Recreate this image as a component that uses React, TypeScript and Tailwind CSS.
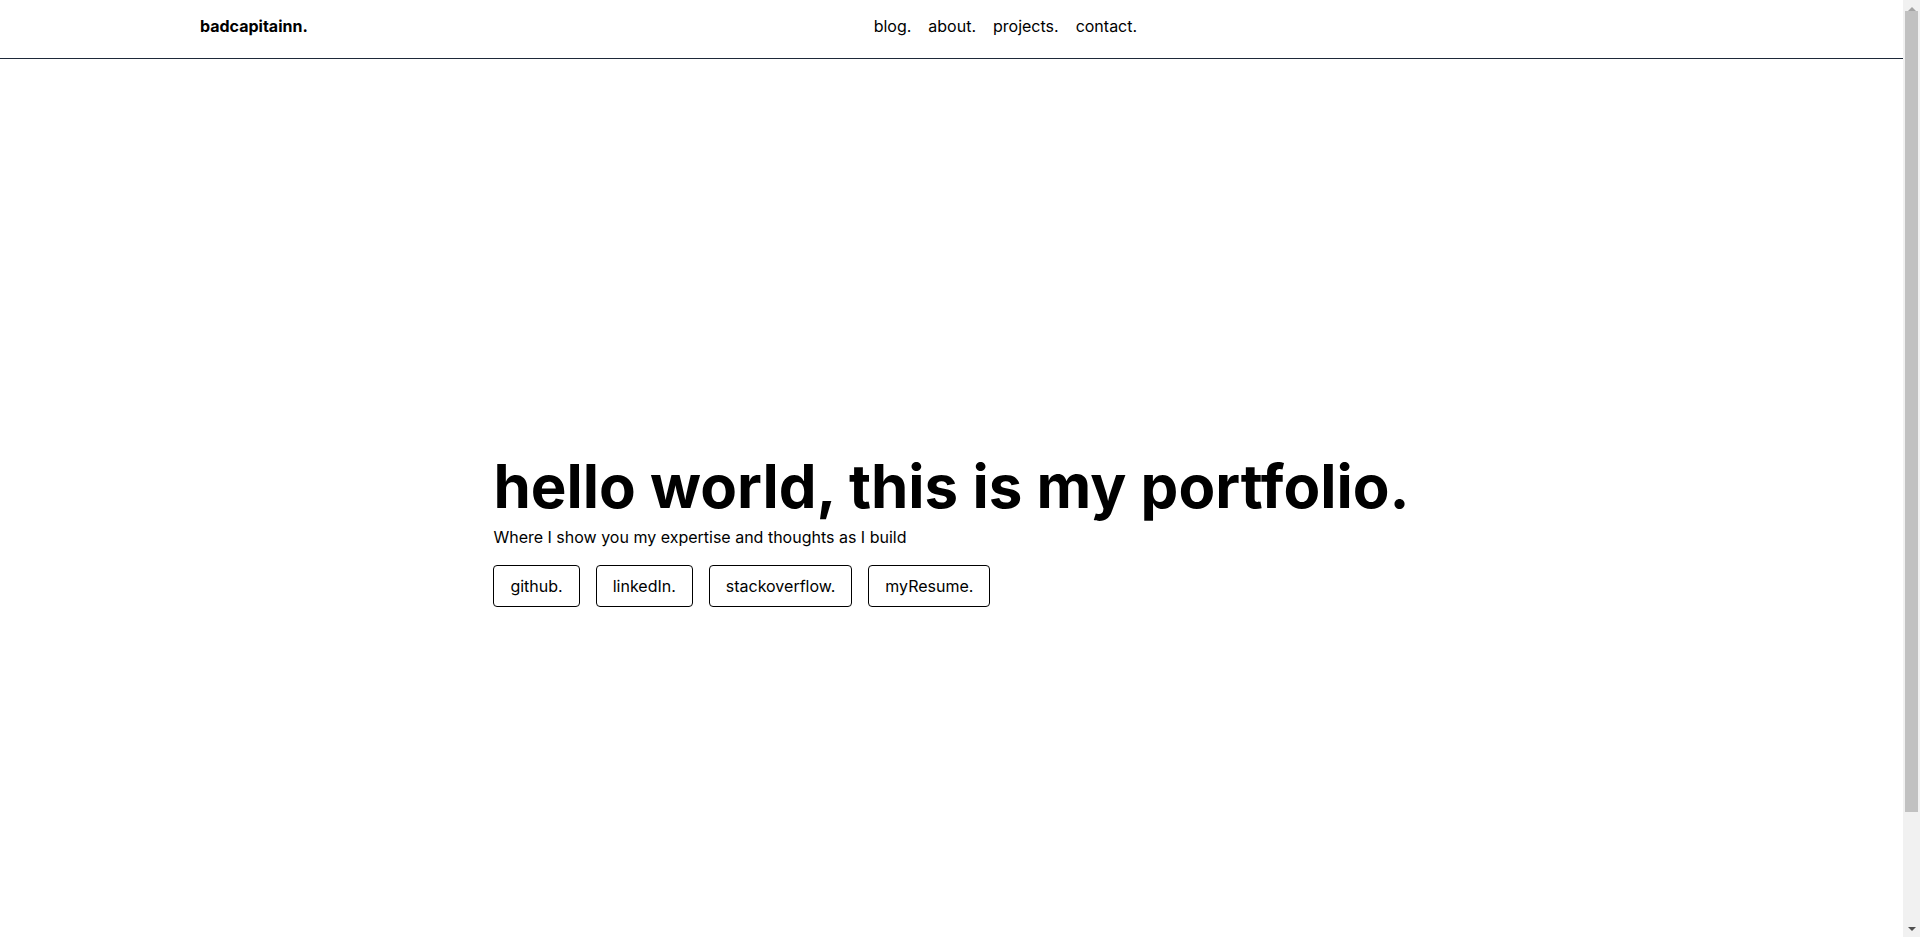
import React from 'react';

const navLinks = ['blog.', 'about.', 'projects.', 'contact.'];
const socials = ['github.', 'linkedIn.', 'stackoverflow.', 'myResume.'];

const App: React.FC = () => {
  return (
    <div className="flex h-screen overflow-hidden bg-white text-black font-['Inter',sans-serif]">
      <div className="flex-1 min-w-0 overflow-hidden">
        <header className="flex items-start justify-between px-[200px] pt-[14px] pb-[20px] border-b border-gray-800">
          <a href="#" className="font-bold text-base leading-6">badcapitainn.</a>
          <nav className="flex gap-[17px] text-base leading-6">
            {navLinks.map((link) => (
              <a key={link} href="#">{link}</a>
            ))}
          </nav>
          <div />
        </header>

        <section className="h-screen pt-[8px] flex items-center justify-center">
          <div className="flex flex-col items-start">
            <h1 className="text-6xl leading-none font-bold">hello world, this is my portfolio.</h1>
            <p className="mt-[9px] text-base leading-6">Where I show you my expertise and thoughts as I build</p>
            <div className="mt-4 flex gap-4">
              {socials.map((s) => (
                <a key={s} href="#" className="px-4 py-2 border border-black rounded text-base leading-6">
                  {s}
                </a>
              ))}
            </div>
          </div>
        </section>
      </div>

      {/* scrollbar strip */}
      <div className="w-[17px] shrink-0 h-screen bg-[#f1f1f1] flex flex-col items-center">
        <div className="h-[17px] flex items-center justify-center">
          <div className="w-0 h-0 border-l-[4px] border-r-[4px] border-b-[4px] border-l-transparent border-r-transparent border-b-[#a3a3a3]" />
        </div>
        <div className="w-[13px] h-[801px] bg-[#c1c1c1] mt-[-6px]" />
        <div className="flex-1" />
        <div className="h-[17px] flex items-center justify-center">
          <div className="w-0 h-0 border-l-[4px] border-r-[4px] border-t-[4px] border-l-transparent border-r-transparent border-t-[#505050]" />
        </div>
      </div>
    </div>
  );
};

export default App;
